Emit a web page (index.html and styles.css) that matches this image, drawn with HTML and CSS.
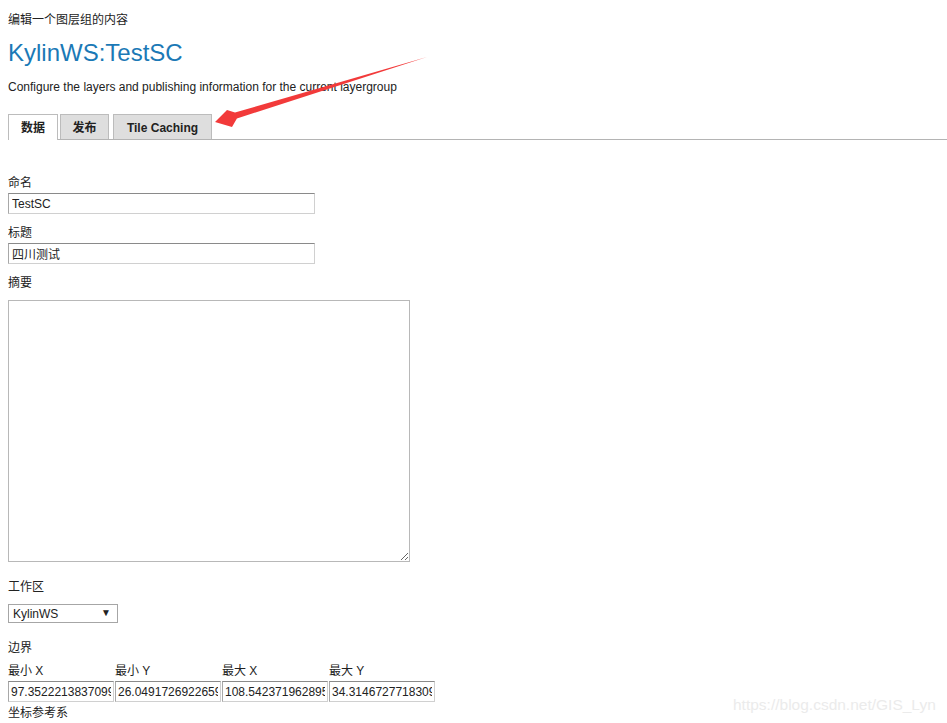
FILE: index.html
```html
<!doctype html>
<html lang="zh-CN">
<head>
  <meta charset="UTF-8">
  <title>编辑图层组</title>
  <link rel="stylesheet" href="styles.css">
</head>
<body>

<div class="page">
  <p class="crumb">编辑一个图层组的内容</p>
  <h1 class="title">KylinWS:TestSC</h1>
  <p class="desc">Configure the layers and publishing information for the current layergroup</p>

  <ul class="tabs">
    <li class="tab tab-active">数据</li>
    <li class="tab">发布</li>
    <li class="tab tab-wide">Tile Caching</li>
  </ul>

  <form class="form">
    <label class="field-label field-first">命名</label>
    <input class="text-input" type="text" value="TestSC">

    <label class="field-label">标题</label>
    <input class="text-input" type="text" value="四川测试">

    <label class="field-label">摘要</label>
    <textarea class="text-area"></textarea>

    <label class="field-label field-loose">工作区</label>
    <span class="select-wrap">
      <select class="select">
        <option>KylinWS</option>
      </select>
    </span>

    <label class="field-label field-loose">边界</label>
    <div class="bounds">
      <span class="bounds-label">最小 X</span>
      <span class="bounds-label">最小 Y</span>
      <span class="bounds-label">最大 X</span>
      <span class="bounds-label">最大 Y</span>
      <input class="bounds-input" type="text" value="97.35222138370995">
      <input class="bounds-input" type="text" value="26.04917269226595">
      <input class="bounds-input" type="text" value="108.54237196289555">
      <input class="bounds-input" type="text" value="34.31467277183095">
    </div>

    <label class="field-label field-tight">坐标参考系</label>
  </form>
</div>

<svg class="arrow" width="947" height="723" viewBox="0 0 947 723">
  <polygon points="215,122 227,110 235,112.6 427,57 236.9,118.4 232,127" fill="#f23a3a"/>
</svg>

<div class="watermark">https://blog.csdn.net/GIS_Lyn</div>

</body>
</html>
```

FILE: styles.css
```css
html,
body {
  margin: 0;
  background-color: white;
  color: #222;
  font-family: "Liberation Sans", "Noto Sans CJK SC", sans-serif;
  font-size: 12px;
}

.page {
  padding: 0 0 0 8px;
  height: 723px;
  overflow: hidden;
}

.crumb {
  margin: 0;
  padding-top: 12px;
  line-height: 16px;
}

.title {
  margin: 10px 0 0;
  font-size: 24px;
  font-weight: normal;
  line-height: 30px;
  color: #1b79b6;
}

.desc {
  margin: 11px 0 0;
  line-height: 16px;
}

.tabs {
  display: flex;
  margin: 19px 0 0;
  padding: 0;
  list-style-type: none;
  border-bottom: 1px solid #b4b4b4;
}

.tab {
  box-sizing: border-box;
  width: 49px;
  height: 25px;
  margin-right: 2px;
  margin-bottom: -1px;
  padding: 0;
  border: 1px solid #bcbcbc;
  border-bottom: 0;
  background-color: #dedede;
  font-weight: bold;
  font-size: 12px;
  line-height: 26px;
  text-align: center;
  white-space: nowrap;
  color: #222;
}

.tab-active {
  width: 50px;
  height: 26px;
  background-color: white;
}

.tab-wide {
  width: 99px;
  margin-left: 2px;
}

.form {
  display: flex;
  flex-direction: column;
  align-items: flex-start;
  padding-top: 35px;
}

.field-label {
  margin-top: 11px;
  line-height: 16px;
}

.field-first {
  margin-top: 0;
}

.field-loose {
  margin-top: 17px;
}

.field-tight {
  margin-top: 3px;
}

.text-input,
.bounds-input {
  box-sizing: border-box;
  height: 21px;
  margin: 2px 0 0;
  padding: 0 3px;
  border: 1px solid;
  border-color: #8a8a8a #d0d0d0 #d0d0d0 #a8a8a8;
  font-family: "Liberation Sans", "Noto Sans CJK SC", sans-serif;
  font-size: 12px;
  color: #222;
}

.text-input {
  width: 307px;
}

.text-area {
  box-sizing: border-box;
  width: 402px;
  height: 262px;
  margin: 9px 0 0;
  border: 1px solid #b8b8b8;
  font-size: 12px;
}

.select-wrap {
  position: relative;
  margin-top: 9px;
}

.select {
  display: block;
  box-sizing: border-box;
  width: 110px;
  height: 19px;
  margin: 0;
  padding: 0 4px;
  border: 1px solid #a6a6a6;
  border-radius: 0;
  background-color: white;
  appearance: none;
  font-family: "Liberation Sans", sans-serif;
  font-size: 12px;
  color: #222;
}

.select-wrap::after {
  position: absolute;
  right: 7px;
  top: 3px;
  font-size: 10px;
  line-height: 12px;
  color: #222;
  content: "▼";
  pointer-events: none;
}

.bounds {
  display: grid;
  grid-template-columns: repeat(4, 106px);
  column-gap: 1px;
  margin-top: 7px;
}

.bounds-label {
  line-height: 16px;
}

.bounds-input {
  width: 106px;
  padding: 0 2px;
}

.arrow {
  position: absolute;
  left: 0;
  top: 0;
  pointer-events: none;
}

.watermark {
  position: absolute;
  left: 733px;
  top: 695px;
  font-family: "Liberation Sans", sans-serif;
  font-size: 15.5px;
  line-height: 20px;
  color: #ebebeb;
}
```
